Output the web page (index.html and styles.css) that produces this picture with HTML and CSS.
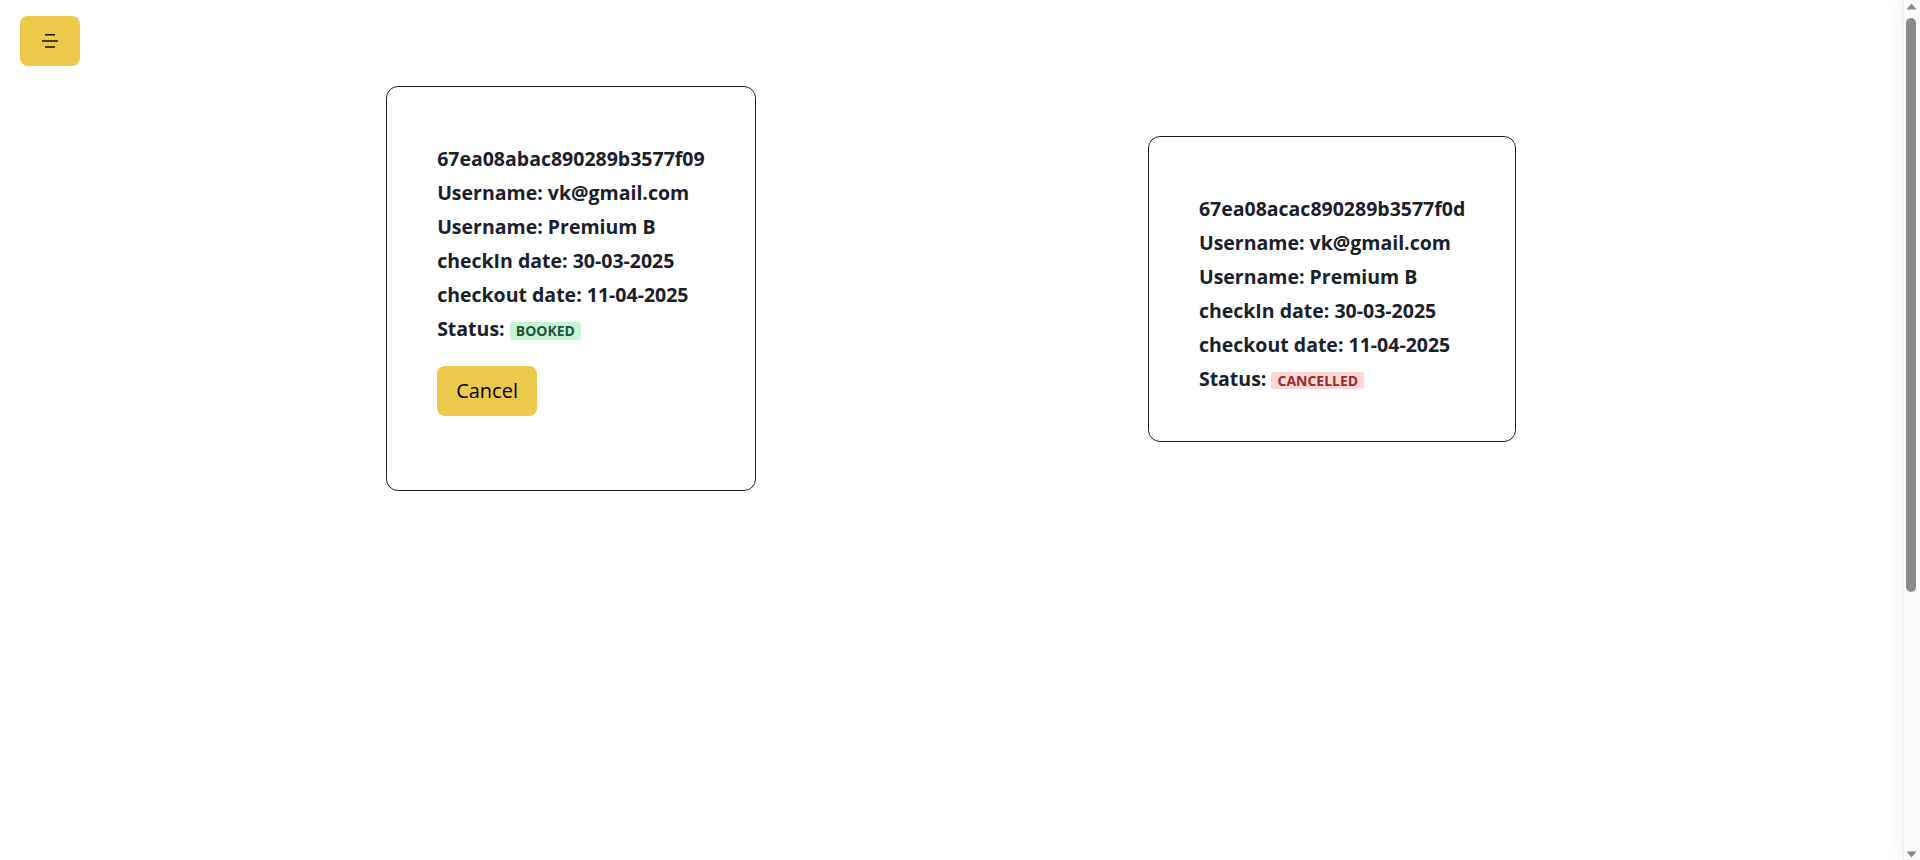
FILE: index.html
```html
<!DOCTYPE html>
<html lang="en">
<head>
<meta charset="utf-8">
<title>Bookings</title>
<link rel="stylesheet" href="styles.css">
</head>
<body>
<header class="topbar">
  <button class="menu-btn" aria-label="Menu">
    <svg width="16" height="14" viewBox="0 0 16 14" aria-hidden="true">
      <line x1="3" y1="0.75" x2="13" y2="0.75" stroke="#111" stroke-width="1.5"/>
      <line x1="0" y1="7" x2="16" y2="7" stroke="#111" stroke-width="1.5"/>
      <line x1="3" y1="13" x2="13" y2="13" stroke="#111" stroke-width="1.5"/>
    </svg>
  </button>
</header>
<main class="bookings">
  <div class="card">
    <p class="line">67ea08abac890289b3577f09</p>
    <p class="line">Username: vk@gmail.com</p>
    <p class="line">Username: Premium B</p>
    <p class="line">checkIn date: 30-03-2025</p>
    <p class="line">checkout date: 11-04-2025</p>
    <p class="line">Status: <span class="badge badge-booked">BOOKED</span></p>
    <button class="cancel-btn">Cancel</button>
  </div>
  <div class="card">
    <p class="line">67ea08acac890289b3577f0d</p>
    <p class="line">Username: vk@gmail.com</p>
    <p class="line">Username: Premium B</p>
    <p class="line">checkIn date: 30-03-2025</p>
    <p class="line">checkout date: 11-04-2025</p>
    <p class="line">Status: <span class="badge badge-cancelled">CANCELLED</span></p>
  </div>
</main>
<aside class="drawer"></aside>
<div class="scrollbar" aria-hidden="true">
  <svg class="sb-arrow" width="17" height="12" viewBox="0 0 17 12"><polygon points="3.5,9.5 13.5,9.5 8.5,3.5" fill="#8a8a8a"/></svg>
  <div class="sb-track"><div class="sb-thumb"></div></div>
  <svg class="sb-arrow" width="17" height="12" viewBox="0 0 17 12"><polygon points="3.5,3.5 13.5,3.5 8.5,9.5" fill="#8a8a8a"/></svg>
</div>
</body>
</html>
```
FILE: styles.css
```css
* { box-sizing: border-box; }
html, body { margin: 0; padding: 0; }
body {
  font-family: "Open Sans", "Noto Sans", sans-serif;
  color: #1a202c;
  background: #fff;
  padding-right: 17px;
}
.topbar {
  padding: 16px 20px 20px;
  display: flex;
}
.menu-btn {
  width: 60px;
  height: 50px;
  border: none;
  border-radius: 8px;
  background: #ecc94b;
  display: flex;
  align-items: center;
  justify-content: center;
  padding: 0;
  cursor: pointer;
}
.menu-btn svg { display: block; }
.bookings {
  width: 80%;
  margin: 0 auto;
  display: grid;
  grid-template-columns: 1fr 1fr;
  align-items: center;
  justify-items: center;
}
.card {
  border: 1px solid #1f1f1f;
  border-radius: 12px;
  padding: 55px 50px 45px;
}
.line {
  margin: 0;
  font-size: 19.5px;
  font-weight: 700;
  line-height: 34px;
  white-space: nowrap;
}
.badge {
  display: inline-block;
  font-size: 14px;
  font-weight: 700;
  line-height: 17.5px;
  padding: 0 6px;
  border-radius: 3px;
}
.badge-booked { background: #c6f6d5; color: #22543d; }
.badge-cancelled { background: #fed7d7; color: #9b2c2c; }
.cancel-btn {
  display: block;
  margin: 20px 0 29px;
  font-family: inherit;
  font-size: 20px;
  font-weight: 400;
  line-height: 28px;
  color: #000;
  background: #ecc94b;
  border: none;
  border-radius: 8px;
  padding: 11px 19px;
  cursor: pointer;
}
.drawer {
  position: fixed;
  top: 0;
  right: 17px;
  width: 300px;
  height: 100vh;
  transform: translateX(100%);
  background: #fff;
  box-shadow: 0 0 20px rgba(0, 0, 0, 0.08);
}
.scrollbar {
  position: fixed;
  top: 0;
  right: 0;
  width: 17px;
  height: 100vh;
  background: #fbfbfb;
  border-left: 1px solid #efefef;
  display: flex;
  flex-direction: column;
  z-index: 10;
}
.sb-arrow {
  display: block;
  flex: none;
  margin-left: -1px;
}
.sb-track {
  flex: 1;
  padding: 6px 0 0 2px;
}
.sb-thumb {
  width: 10px;
  height: 574px;
  border-radius: 5px;
  background: #8a8a8a;
}
```
